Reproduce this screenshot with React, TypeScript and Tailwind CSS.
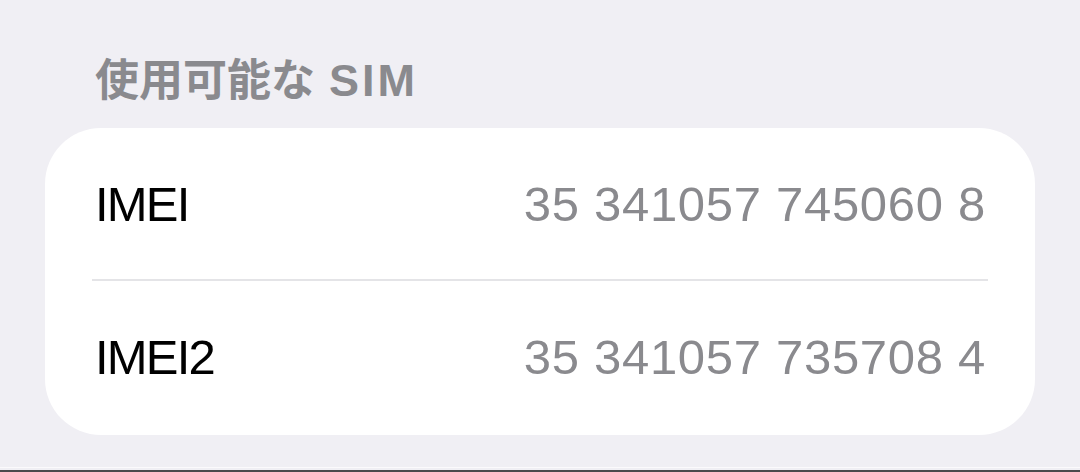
import React from "react";

const rows = [
  { label: "IMEI", value: "35 341057 745060 8" },
  { label: "IMEI2", value: "35 341057 735708 4" },
];

export default function App() {
  return (
    <div
      className="w-[1080px] h-[472px] bg-[#f0eff4] flex flex-col overflow-hidden"
      style={{ fontFamily: '"Liberation Sans", "Noto Sans CJK JP", sans-serif' }}
    >
      <div className="h-[128px] pl-[95px] pt-[47px]">
        <div className="flex items-baseline text-[#8a8a8e] leading-[60px]">
          <span
            className="text-[44px] font-semibold"
            style={{ fontFamily: '"Noto Sans CJK JP", sans-serif' }}
          >
            使用可能な
          </span>
          <span className="ml-[14px] text-[45px] font-bold tracking-[3px]">SIM</span>
        </div>
      </div>
      <div className="mx-[45px] w-[990px] h-[307px] bg-white rounded-[56px] flex flex-col">
        <div className="h-[151px] flex items-center justify-between pl-[50px] pr-[49px] pt-[2px]">
          <span className="text-[49px] text-black tracking-[-1.8px]">{rows[0].label}</span>
          <span className="text-[49px] text-[#8a8a8e] tracking-[0.7px]">{rows[0].value}</span>
        </div>
        <div className="mx-[47px] h-[2px] bg-[#e4e4e7]" />
        <div className="flex-1 flex items-center justify-between pl-[50px] pr-[49px]">
          <span className="text-[49px] text-black tracking-[-1.8px]">{rows[1].label}</span>
          <span className="text-[49px] text-[#8a8a8e] tracking-[0.7px]">{rows[1].value}</span>
        </div>
      </div>
      <div className="flex-1" />
      <div className="h-[1px] bg-white/70" />
      <div className="h-[2px] bg-[#f0eff4]" />
      <div className="h-[2px] bg-[#4a4a4c]" />
    </div>
  );
}
